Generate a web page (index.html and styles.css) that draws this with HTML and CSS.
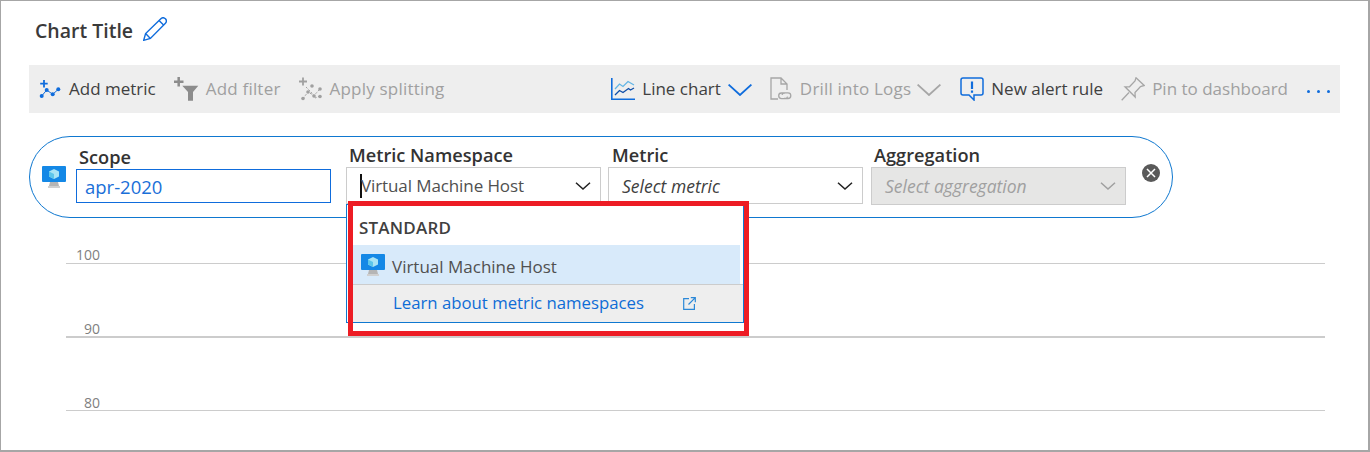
FILE: index.html
```html
<!DOCTYPE html>
<html lang="en">
<head>
    <meta charset="UTF-8">
    <meta name="viewport" content="width=device-width, initial-scale=1.0">
    <title>Chart Title</title>
    <link rel="stylesheet" href="styles.css">
</head>
<body>

<div class="frame">
    <!-- Title -->
    <div class="title-row">
        <span class="title">Chart Title</span>
        <svg class="pencil" width="24" height="24" viewBox="0 0 24 24" fill="none" stroke="#0f6cdc" stroke-width="1.4">
            <path d="M.7 23.3 2.6 16.6 17.6 1.9C19 .5 21 .5 22.4 1.7 23.6 3 23.6 5 22.2 6.4L7.4 21.4Z"/>
            <path d="M2.6 16.6 7.4 21.4M16 3.5 20.6 8"/>
        </svg>
    </div>

    <!-- Toolbar -->
    <div class="toolbar">
        <div class="tool">
            <svg width="24" height="24" viewBox="0 0 24 24" fill="none" stroke="#0f6cdc">
                <path d="M6 3v7.500M2.200 6.700h7.500" stroke-width="1.800"/>
                <path d="M3.700 19 8.700 13l6 4.300 5.600-5" stroke-width="1"/>
                <g fill="#0f6cdc" stroke="none"><circle cx="3.700" cy="19" r="2"/><circle cx="8.700" cy="13" r="2"/><circle cx="14.700" cy="17.300" r="2"/><circle cx="20.300" cy="12.300" r="2"/></g>
            </svg>
            <span>Add metric</span>
        </div>
        <div class="tool off">
            <svg width="25" height="24" viewBox="0 0 25 24" fill="#8c8c8c">
                <path d="M4.700 0v9.500M0 4.800h9.500" stroke="#8c8c8c" stroke-width="2.500"/>
                <path d="M8.300 8.700h16L19 15v8.700h-5V15Z"/>
            </svg>
            <span class="wide">Add filter</span>
        </div>
        <div class="tool off">
            <svg width="24" height="24" viewBox="0 0 24 24" fill="none" stroke="#a0a0a0">
                <path d="M4 .5v8M0 4.500h8" stroke-width="1.800"/>
                <path d="M4 21.500 9 15l6 3.500 6-6.500M7 10l5 5 4 6 5-2" stroke-dasharray="2 1.500"/>
                <g fill="#a0a0a0" stroke="none"><circle cx="4" cy="21.500" r="1.800"/><circle cx="9" cy="15" r="1.800"/><circle cx="15" cy="19" r="1.800"/><circle cx="21" cy="12" r="1.800"/><circle cx="13" cy="9" r="1.800"/><circle cx="21" cy="19.500" r="1.800"/></g>
            </svg>
            <span class="wide">Apply splitting</span>
        </div>

        <div class="tool push">
            <svg width="24" height="24" viewBox="0 0 24 24" fill="none" stroke-width="1.300">
                <path d="M.8 1v21.200H24" stroke="#0f6cdc" stroke-width="1.600"/>
                <path d="M4 12 8.500 7l3.500 2.500L17 4.500 23 8" stroke="#62b5e5"/>
                <path d="M4 18 8.500 13.500l3.500 2 5.500-4 2 1.500 3.500-2" stroke="#0f4ea8"/>
            </svg>
            <span>Line chart</span>
            <svg class="chev" width="24" height="12" viewBox="0 0 24 12" fill="none" stroke="#0f6cdc" stroke-width="1.800"><path d="M.6.600 12 11 23.400.600"/></svg>
        </div>
        <div class="tool off drill">
            <svg width="24" height="25" viewBox="0 0 24 25" fill="none" stroke="#a6a6a6" stroke-width="1.300">
                <path d="M8 22H1V1h10l6 6v6M11 1v6h6"/>
                <path d="M15 16h-3.500a2.800 2.800 0 0 0 0 5.600H15a2.800 2.800 0 0 0 2.600-2M14 21.500h4a2.800 2.800 0 0 0 0-5.600h-3.500a2.800 2.800 0 0 0-2.500 2"/>
            </svg>
            <span class="wide">Drill into Logs</span>
            <svg class="chev" width="24" height="12" viewBox="0 0 24 12" fill="none" stroke="#a6a6a6" stroke-width="1.800"><path d="M.6.600 12 11 23.400.600"/></svg>
        </div>
        <div class="tool">
            <svg width="24" height="24" viewBox="0 0 24 24" fill="none" stroke="#0f6cdc" stroke-width="1.500">
                <path d="M3 1h18a2 2 0 0 1 2 2v13a2 2 0 0 1-2 2h-7v5l-5-5H3a2 2 0 0 1-2-2V3a2 2 0 0 1 2-2Z"/>
                <path d="M12 4.500v7.500M12 13.500v2.200" stroke-width="2.200"/>
            </svg>
            <span>New alert rule</span>
        </div>
        <div class="tool off">
            <svg width="24" height="24" viewBox="0 0 24 24" fill="none" stroke="#a6a6a6" stroke-width="1.300">
                <path d="M.7 23.300 8 15.500M15 .8 23.200 8.500 19.500 9.500 14 15.500 14.200 20 4 9.800 8.500 9.800 14 4Z"/>
            </svg>
            <span>Pin to dashboard</span>
        </div>
        <div class="more"><i></i><i></i><i></i></div>
    </div>

    <!-- Metric picker -->
    <div class="pill">
        <svg class="vm" width="24" height="22" viewBox="0 0 24 22">
            <path d="M0 1a1 1 0 0 1 1-1h22a1 1 0 0 1 1 1v14a1 1 0 0 1-1 1H1a1 1 0 0 1-1-1Z" fill="#1488e6"/>
            <path d="M12 3l5 2.500v5L12 13l-5-2.500v-5Z" fill="#a8e4f5"/>
            <path d="M12 8v5l-5-2.500v-5Z" fill="#5cc6ea"/>
            <path d="M8 16h8l1 4H7Z" fill="#b5b5b5"/>
            <path d="M6 20h12v2H6Z" fill="#d0d0d0"/>
        </svg>

        <div class="field scope">
            <label>Scope</label>
            <div class="scope-input">apr-2020</div>
        </div>

        <div class="field namespace">
            <label>Metric Namespace</label>
            <div class="select">
                <span class="caret"></span><span>Virtual Machine Host</span>
                <svg class="select-chev" width="16" height="8" viewBox="0 0 16 8" fill="none" stroke="#222" stroke-width="1.500"><path d="M1 .7 8 7 15 .7"/></svg>
            </div>

            <div class="dropdown">
                <div class="group-name">STANDARD</div>
                <div class="option">
                    <svg width="24" height="22" viewBox="0 0 24 22">
                        <path d="M0 1a1 1 0 0 1 1-1h22a1 1 0 0 1 1 1v14a1 1 0 0 1-1 1H1a1 1 0 0 1-1-1Z" fill="#1488e6"/>
                        <path d="M12 3l5 2.500v5L12 13l-5-2.500v-5Z" fill="#a8e4f5"/>
                        <path d="M12 8v5l-5-2.500v-5Z" fill="#5cc6ea"/>
                        <path d="M8 16h8l1 4H7Z" fill="#b5b5b5"/>
                        <path d="M6 20h12v2H6Z" fill="#d0d0d0"/>
                    </svg>
                    <span>Virtual Machine Host</span>
                </div>
                <div class="learn">
                    <span>Learn about metric namespaces</span>
                    <svg width="13" height="13" viewBox="0 0 13 13" fill="none" stroke="#2b88d8" stroke-width="1.200">
                        <path d="M6 1.600H.7v10.700h10.700V7M5.500 7.500 12.300.7M7.800.7h4.500v4.500"/>
                    </svg>
                </div>
            </div>
            <div class="callout"></div>
        </div>

        <div class="field metric">
            <label>Metric</label>
            <div class="select">
                <em>Select metric</em>
                <svg class="select-chev" width="16" height="8" viewBox="0 0 16 8" fill="none" stroke="#222" stroke-width="1.500"><path d="M1 .7 8 7 15 .7"/></svg>
            </div>
        </div>

        <div class="field aggregation">
            <label>Aggregation</label>
            <div class="select disabled">
                <em>Select aggregation</em>
                <svg class="select-chev" width="16" height="8" viewBox="0 0 16 8" fill="none" stroke="#a0a0a0" stroke-width="1.500"><path d="M1 .7 8 7 15 .7"/></svg>
            </div>
        </div>

        <svg class="close" width="18" height="18" viewBox="0 0 18 18">
            <circle cx="9" cy="9" r="9" fill="#595959"/>
            <path d="M5 5l8 8M13 5l-8 8" stroke="#fff" stroke-width="1.500"/>
        </svg>
    </div>

    <!-- Empty chart -->
    <div class="chart">
        <div class="tick first"><span>100</span></div>
        <div class="tick mid"><span>90</span></div>
        <div class="tick last"><span>80</span></div>
    </div>
</div>

</body>
</html>
```

FILE: styles.css
```css
* {
    box-sizing: border-box;
}
body {
    margin: 0;
    font-family: "Open Sans", Arial, sans-serif;
    font-size: 17px;
    color: #404040;
}
.frame {
    position: relative;
    width: 1370px;
    height: 452px;
    border: 1px solid #a6a6a6;
    border-width: 1px 2px 2px 1px;
    overflow: hidden;
    background: #fff;
}
.title-row {
    display: flex;
    align-items: center;
    height: 64px;
    padding: 0 0 6px 34px;
}
.title {
    font-size: 19.500px;
    font-weight: 600;
    color: #3a3a3a;
}
.pencil {
    margin-left: 10px;
    margin-top: -2px;
}
.toolbar {
    display: flex;
    align-items: center;
    gap: 18px;
    width: 1311px;
    height: 48px;
    margin-left: 28px;
    padding: 0 9px 0 9px;
    background: #eee;
}
.tool {
    display: flex;
    align-items: center;
    gap: 7px;
    white-space: nowrap;
}
.tool span {
    margin-top: -2px;
}
.tool.off {
    color: #a0a0a0;
}
.tool.push {
    margin-left: auto;
}
.tool.drill {
    gap: 6px;
    margin-right: 1px;
}
.wide {
    letter-spacing: .2px;
}
.chev {
    margin-top: 2px;
}
.more {
    display: flex;
    gap: 7px;
    margin-left: 1px;
    margin-right: 1px;
    padding-top: 4px;
}
.more i {
    width: 3px;
    height: 3px;
    border-radius: 50%;
    background: #0f6cdc;
}
.pill {
    display: flex;
    align-items: flex-start;
    width: 1144px;
    height: 82px;
    margin: 23px 0 0 28px;
    padding: 8px 0 0 12px;
    border: 1px solid #0f78d0;
    border-radius: 41px;
}
.vm {
    margin: 21px 10px 0 0;
}
.field {
    width: 255px;
}
.field label {
    display: block;
    height: 22px;
    padding-left: 3px;
    font-size: 18.200px;
    font-weight: 600;
    line-height: 20px;
    color: #333;
}
.scope {
    margin-top: 2px;
}
.scope-input {
    height: 34px;
    padding-left: 8px;
    border: 1px solid #0f6cdc;
    font-size: 18.500px;
    line-height: 33px;
    color: #1a6fd8;
}
.namespace {
    position: relative;
    margin-left: 15px;
}
.metric {
    margin-left: 7px;
}
.metric label {
    padding-left: 4px;
}
.aggregation {
    margin-left: 8px;
}
.select {
    display: flex;
    align-items: center;
    height: 37px;
    padding: 0 9px 0 13px;
    border: 1px solid #ccc;
    background: #fff;
    font-size: 17px;
    letter-spacing: -.1px;
    color: #505050;
}
.select em {
    font-size: 17.500px;
    letter-spacing: 0;
    color: #404040;
}
.select-chev {
    margin-left: auto;
}
.select.disabled {
    background: #e6e6e5;
    height: 38px;
}
.select.disabled em {
    color: #a0a0a0;
}
.caret {
    width: 2px;
    height: 24px;
    margin-right: -1px;
    background: #111;
}
/* dropdown lies over the chart */
.dropdown {
    position: absolute;
    left: 0;
    top: 59px;
    width: 398px;
    height: 119px;
    padding-left: 6px;
    border: 1px solid #0f78d0;
    background: #fff;
}
.group-name {
    height: 40px;
    padding-left: 6px;
    line-height: 46px;
    font-weight: 600;
    letter-spacing: .2px;
}
.option {
    display: flex;
    align-items: center;
    gap: 7px;
    height: 39px;
    margin-right: 3px;
    padding-left: 8px;
    background: #d8eafa;
    color: #505050;
}
.option span {
    margin-top: 3px;
}
.learn {
    display: flex;
    align-items: center;
    height: 38px;
    padding-left: 40px;
    border-top: 1px solid #ccc;
    background: #eee;
    font-size: 16.750px;
    color: #0f6cd6;
}
.learn span {
    margin-top: -2px;
}
.learn svg {
    margin-left: 39px;
}
.callout {
    position: absolute;
    left: 2px;
    top: 56px;
    width: 401px;
    height: 135px;
    border: 5px solid #ed1c24;
}
.close {
    margin: 19px 0 0 16px;
}
.chart {
    width: 1259px;
    margin-left: 65px;
    font-size: 14px;
    color: #7f7f7f;
}
.tick {
    display: flex;
    align-items: flex-end;
    justify-content: flex-end;
    width: 100%;
    border-bottom: 1px solid #ccc;
    padding-right: 1225px;
    line-height: 15px;
}
.tick.first {
    height: 46px;
    padding-bottom: 1px;
}
.tick.mid {
    height: 74px;
    border-bottom-width: 2px;
}
.tick.last {
    height: 73px;
}
```
